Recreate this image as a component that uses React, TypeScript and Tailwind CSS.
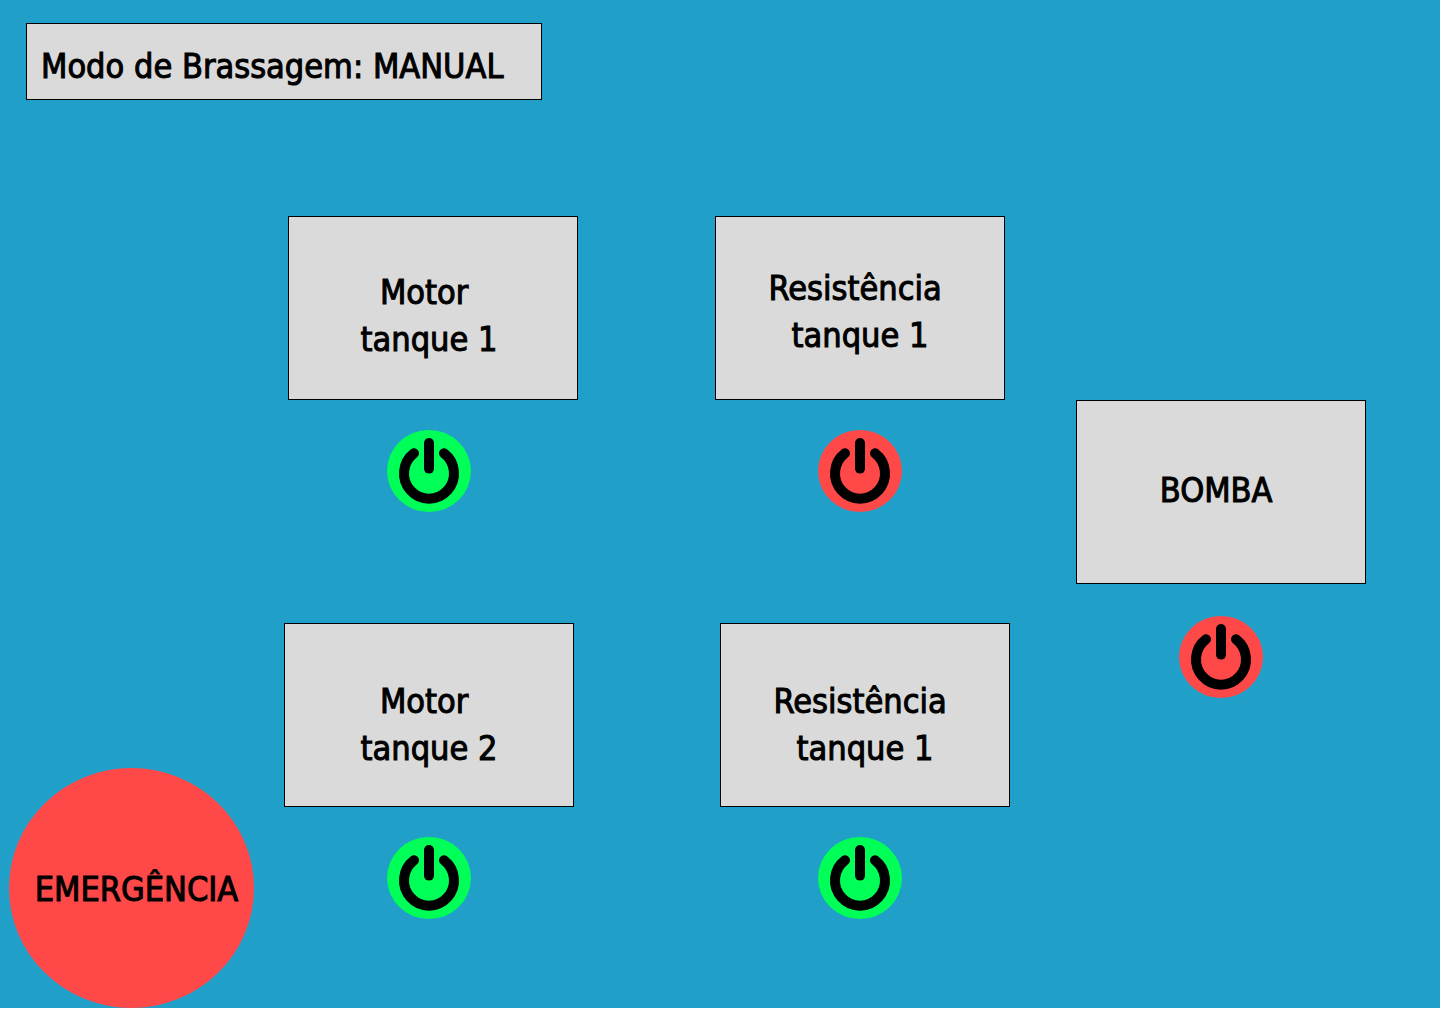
import { useState } from 'react';
import type { ReactNode } from 'react';

type PowerButtonProps = {
  label: string;
  initialOn: boolean;
};

function PowerButton({ label, initialOn }: PowerButtonProps) {
  const [on, setOn] = useState(initialOn);
  return (
    <button
      type="button"
      aria-label={label}
      aria-pressed={on}
      onClick={() => setOn(!on)}
      className={`h-[82px] w-[84px] shrink-0 cursor-pointer rounded-[50%] ${on ? 'bg-[#00ff57]' : 'bg-[#ff4848]'}`}
    >
      <svg viewBox="0 0 84 82" fill="none" stroke="black" strokeWidth="10" strokeLinecap="round" className="size-full" aria-hidden="true">
        <path d="M42 13V38.6" />
        <path d="M27 23.3A25 25.2 0 1 0 57 23.3" />
      </svg>
    </button>
  );
}

function Card({ className = '', children }: { className?: string; children: ReactNode }) {
  return (
    <h2
      className={`flex h-[184px] w-[290px] shrink-0 items-center justify-center border border-black bg-[#dadada] text-center whitespace-pre ${className}`}
    >
      {children}
    </h2>
  );
}

export default function App() {
  return (
    <div className="bg-[#209fc9] font-['DejaVu_Sans_Condensed','DejaVu_Sans',sans-serif] text-[34px] leading-[47px] text-black [-webkit-text-stroke:1px_black]">
      <header className="flex px-[26px] pt-[23px]">
        <h1 className="flex h-[77px] min-w-[516px] items-center border border-black bg-[#dadada] pt-2.5 pl-3.5">
          Modo de Brassagem: MANUAL
        </h1>
      </header>

      <main className="flex pr-[74px] pl-[9px]">
        <button
          type="button"
          className="h-60 w-[245px] shrink-0 cursor-pointer self-end rounded-[50%] bg-[#ff4848] pt-0.5 pl-2.5"
        >
          EMERGÊNCIA
        </button>

        <div className="ml-[30px] flex flex-1 flex-col gap-[111px] pt-[116px] pb-[89px]">
          <section className="flex flex-col gap-[30px]">
            <div className="flex justify-between pr-[5px] pl-1">
              <Card className="pt-4 pr-2">{'Motor \ntanque 1'}</Card>
              <Card className="pt-2">{'Resistência \ntanque 1'}</Card>
            </div>
            <div className="flex justify-between pr-[108px] pl-[103px]">
              <PowerButton label="Motor tanque 1" initialOn />
              <PowerButton label="Resistência tanque 1" initialOn={false} />
            </div>
          </section>

          <section className="flex flex-col gap-[30px]">
            <div className="flex justify-between">
              <Card className="pt-5">{'Motor \ntanque 2'}</Card>
              <Card className="pt-5">{'Resistência \ntanque 1'}</Card>
            </div>
            <div className="flex justify-between pr-[108px] pl-[103px]">
              <PowerButton label="Motor tanque 2" initialOn />
              <PowerButton label="Resistência tanque 1, segundo conjunto" initialOn />
            </div>
          </section>
        </div>

        <section className="ml-[66px] flex flex-col items-center gap-8 pt-[300px]">
          <Card className="pb-1">{'BOMBA '}</Card>
          <PowerButton label="Bomba" initialOn={false} />
        </section>
      </main>
    </div>
  );
}
